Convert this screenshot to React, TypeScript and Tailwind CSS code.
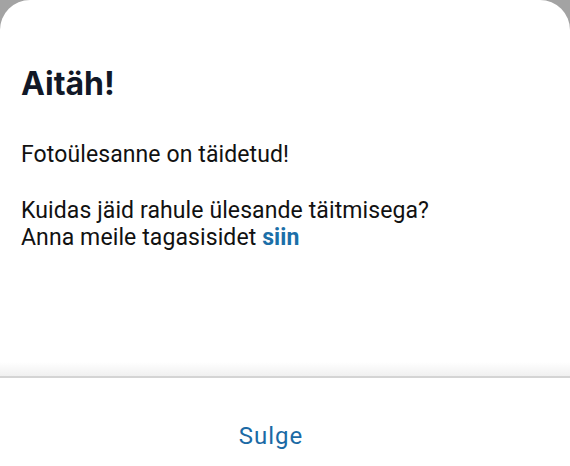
import React from "react";

export default function App() {
  return (
    <div className="w-[570px] h-[466px] bg-[#a3a3a3] overflow-hidden">
      <div className="w-full h-full bg-white rounded-t-[30px] flex flex-col">
        <div className="flex-1 px-[21px] pt-[65px]">
          <h1 className="text-[32px] leading-[38px] font-bold text-[#111827] font-['Inter',sans-serif]">Aitäh!</h1>
          <div className="mt-[38px] text-[23px] leading-[27px] tracking-[0.1px] text-[#111111] font-['Roboto',sans-serif]">
            <p>Fotoülesanne on täidetud!</p>
            <p className="mt-[29px]">Kuidas jäid rahule ülesande täitmisega?</p>
            <p>
              Anna meile tagasisidet <span className="font-bold text-[#1b6fa8]">siin</span>
            </p>
          </div>
        </div>
        <div className="h-[14px] bg-gradient-to-b from-white to-[#f0f0f0]" />
        <div className="h-[2px] bg-[#d4d4d4]" />
        <div className="h-[88px] flex justify-center pt-[44px] pr-[28px]">
          <span className="text-[24px] leading-[28px] tracking-[1px] text-[#1b6aa5] font-['Roboto',sans-serif]">Sulge</span>
        </div>
      </div>
    </div>
  );
}
